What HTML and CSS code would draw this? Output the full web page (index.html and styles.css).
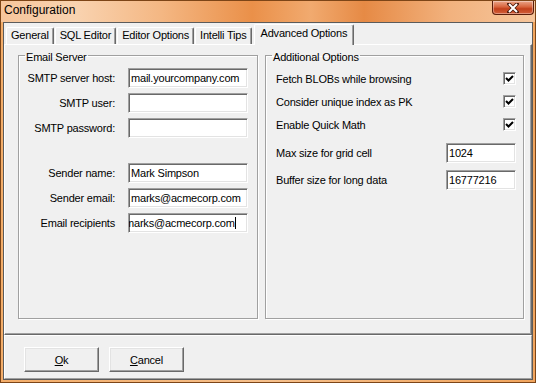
FILE: index.html
```html
<!DOCTYPE html>
<html lang="en">
<head>
    <meta charset="UTF-8">
    <title>Configuration</title>
    <link rel="stylesheet" href="styles.css">
</head>
<body>
    <div class="window">
        <div class="titlebar">
            <span class="title">Configuration</span>
            <button class="close" title="Close">
                <svg width="12" height="10" viewBox="0 0 12 10">
                    <path d="M2 1 L10 9 M10 1 L2 9" stroke="#4a1a0c" stroke-width="3.6" stroke-linecap="square"/>
                    <path d="M2 1 L10 9 M10 1 L2 9" stroke="#fff" stroke-width="2"/>
                </svg>
            </button>
        </div>

        <div class="client">
            <div class="tabstrip">
                <div class="tab">General</div>
                <div class="tab">SQL Editor</div>
                <div class="tab">Editor Options</div>
                <div class="tab">Intelli Tips</div>
                <div class="tab active">Advanced Options</div>
            </div>

            <div class="pane">
                <fieldset class="group email">
                    <legend>Email Server</legend>
                    <div class="fields">
                        <label>SMTP server host:</label>
                        <div class="edit">mail.yourcompany.com</div>
                        <label>SMTP user:</label>
                        <div class="edit"></div>
                        <label>SMTP password:</label>
                        <div class="edit"></div>
                    </div>
                    <div class="fields sender">
                        <label>Sender name:</label>
                        <div class="edit">Mark Simpson</div>
                        <label>Sender email:</label>
                        <div class="edit">marks@acmecorp.com</div>
                        <label>Email recipients</label>
                        <div class="edit scrolled"><span class="caret">marks@acmecorp.com</span></div>
                    </div>
                </fieldset>

                <fieldset class="group options">
                    <legend>Additional Options</legend>
                    <div class="opts">
                        <div class="check-row">
                            <span>Fetch BLOBs while browsing</span>
                            <span class="checkbox"><svg width="11" height="11" viewBox="0 0 11 11"><path d="M2 5 L4.5 7.5 L9 3" fill="none" stroke="#000" stroke-width="2"/></svg></span>
                        </div>
                        <div class="check-row">
                            <span>Consider unique index as PK</span>
                            <span class="checkbox"><svg width="11" height="11" viewBox="0 0 11 11"><path d="M2 5 L4.5 7.5 L9 3" fill="none" stroke="#000" stroke-width="2"/></svg></span>
                        </div>
                        <div class="check-row">
                            <span>Enable Quick Math</span>
                            <span class="checkbox"><svg width="11" height="11" viewBox="0 0 11 11"><path d="M2 5 L4.5 7.5 L9 3" fill="none" stroke="#000" stroke-width="2"/></svg></span>
                        </div>
                        <div class="num-row">
                            <span>Max size for grid cell</span>
                            <div class="edit num">1024</div>
                        </div>
                        <div class="num-row">
                            <span>Buffer size for long data</span>
                            <div class="edit num">16777216</div>
                        </div>
                    </div>
                </fieldset>
            </div>

            <div class="buttons">
                <button class="btn"><u>O</u>k</button>
                <button class="btn"><u>C</u>ancel</button>
            </div>
        </div>
    </div>
</body>
</html>
```

FILE: styles.css
```css
* {
    box-sizing: border-box;
}
html, body {
    margin: 0;
    background: #f0a65e;
}
body {
    font-family: "Liberation Sans", Arial, sans-serif;
    font-size: 11px;
    letter-spacing: -0.2px;
    color: #000;
}
.window {
    width: 536px;
    height: 383px;
    display: flex;
    flex-direction: column;
    border: 1px solid #7d4517;
    background: linear-gradient(90deg, #f3ad6a, #f6c08c 50%, #f1a55e);
}
.titlebar {
    height: 21px;
    display: flex;
    justify-content: space-between;
    align-items: flex-start;
    background: linear-gradient(90deg, #f6c59b 0%, #f9d3b0 14%, #f4b783 30%, #ea9049 47%, #f1aa6f 58%, #e68a45 68%, #f2b27e 84%, #f6c69c 100%);
}
.title {
    font-size: 12px;
    letter-spacing: 0;
    line-height: 19px;
    padding-left: 3px;
}
.close {
    width: 42px;
    height: 14px;
    margin-right: 1px;
    padding: 0;
    border: 1px solid #5a1d0a;
    border-top: 0;
    border-radius: 0 0 4px 4px;
    background: linear-gradient(#eba68a, #d8653e 45%, #c2401b 60%, #d2603a);
    box-shadow: inset 0 0 0 1px rgba(255,255,255,0.35);
    display: flex;
    align-items: center;
    justify-content: center;
}
.client {
    flex: 1;
    margin: 0 2px 2px;
    border: 1px solid #5b5b5b;
    background: #f0f0f0;
    display: flex;
    flex-direction: column;
}
.tabstrip {
    height: 21px;
    display: flex;
    align-items: flex-end;
    padding-left: 2px;
}
.tab {
    height: 17px;
    padding: 0 4px;
    line-height: 15px;
    margin-right: 1px;
    border: 1px solid #fff;
    border-bottom: 0;
    border-right-color: #696969;
    border-radius: 2px 2px 0 0;
    box-shadow: inset -1px 0 #a0a0a0;
    white-space: nowrap;
}
.tab.active {
    position: relative;
    height: 21px;
    margin: 0 0 -1px 1px;
    padding: 0 6px;
    line-height: 16px;
    background: #f0f0f0;
}
.pane {
    flex: 1;
    display: flex;
    gap: 7px;
    padding: 2px 7px 15px 13px;
    border: 1px solid #fff;
    border-right-color: #696969;
    border-bottom-color: #696969;
    box-shadow: inset -1px -1px #a0a0a0;
}
.group {
    margin: 0;
    padding: 0;
    min-width: 0;
    border: 1px solid #a0a0a0;
    box-shadow: inset 1px 1px #fff, 1px 1px #fff;
}
.group legend {
    margin-left: 6px;
    padding: 4px 1px 0;
    line-height: 13px;
}
.email {
    width: 240px;
}
.options {
    flex: 1;
}
.fields {
    display: grid;
    grid-template-columns: 96px 120px;
    grid-auto-rows: 20px;
    column-gap: 13px;
    row-gap: 5px;
    padding-top: 4px;
}
.fields.sender {
    padding-top: 25px;
}
.fields label {
    text-align: right;
    line-height: 20px;
    white-space: nowrap;
}
.edit {
    height: 20px;
    background: #fff;
    border: 1px solid;
    border-color: #a0a0a0 #fff #fff #a0a0a0;
    box-shadow: inset 1px 1px #696969, inset -1px -1px #e3e3e3;
    padding: 0 2px;
    line-height: 18px;
    white-space: nowrap;
    overflow: hidden;
}
.edit.scrolled {
    text-indent: -6px;
}
.caret {
    border-right: 1px solid #000;
}
.opts {
    padding: 3px 7px 0 10px;
}
.check-row {
    height: 23px;
    display: flex;
    align-items: center;
    justify-content: space-between;
}
.checkbox {
    width: 13px;
    height: 13px;
    background: #fff;
    border: 1px solid;
    border-color: #a0a0a0 #fff #fff #a0a0a0;
    box-shadow: inset 1px 1px #696969, inset -1px -1px #e3e3e3;
    display: flex;
}
.num-row {
    display: flex;
    align-items: center;
    justify-content: space-between;
    margin-top: 7px;
}
.edit.num {
    width: 70px;
}
.buttons {
    height: 44px;
    display: flex;
    gap: 10px;
    align-items: flex-start;
    padding: 11px 0 0 19px;
    border: 1px solid #fff;
    border-right-color: #a0a0a0;
    border-bottom-color: #a0a0a0;
}
.btn {
    width: 75px;
    height: 25px;
    padding: 0;
    font: inherit;
    letter-spacing: inherit;
    color: #000;
    background: #f0f0f0;
    border: 1px solid;
    border-color: #fff #696969 #696969 #fff;
    box-shadow: inset -1px -1px #a0a0a0, inset 1px 1px #e3e3e3;
}
```
